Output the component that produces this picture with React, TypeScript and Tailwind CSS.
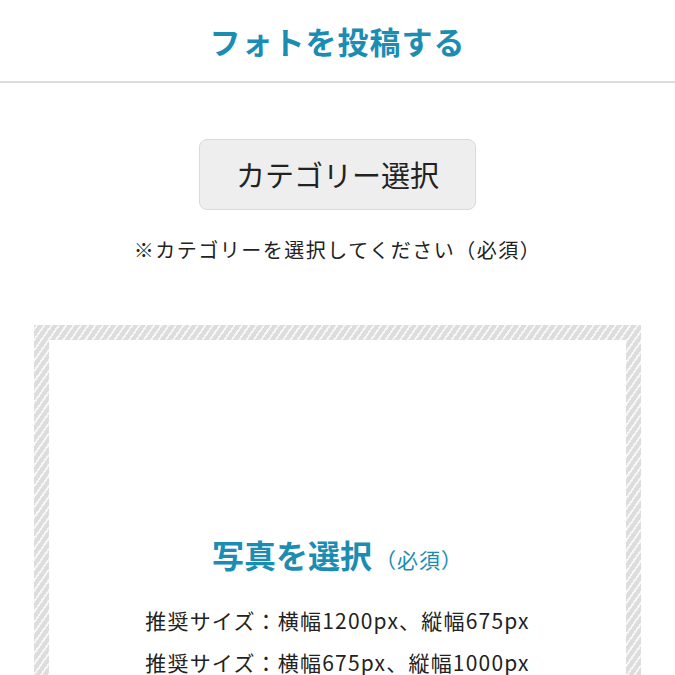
export default function App() {
  return (
    <div className="min-h-[675px] bg-white font-['Noto_Sans_CJK_JP','Noto_Sans',sans-serif] text-[#222]">
      <header className="flex h-[83px] items-center justify-center border-b-2 border-[#dcdcdc]">
        <h1 className="text-[31px] font-bold leading-none tracking-[1px] text-[#1b8db3]">フォトを投稿する</h1>
      </header>
      <div className="flex flex-col items-center">
        <button className="mt-[56px] flex h-[71px] w-[277px] items-center justify-center rounded-[8px] border border-[#d9d9d9] bg-[#eeeeee] text-[29px] leading-none text-[#222]">
          カテゴリー選択
        </button>
        <p className="mt-[25px] text-[20px] leading-[30px] tracking-[1.5px] text-[#222]">※カテゴリーを選択してください（必須）</p>
      </div>
      <div className="mx-[34px] mt-[60px] bg-[repeating-linear-gradient(-55deg,#dddddd_0px,#dddddd_4px,#f6f6f6_4px,#f6f6f6_6px)] p-[15px]">
        <div className="flex flex-col items-center bg-white pb-[60px] pt-[190px]">
          <div className="flex items-baseline">
            <span className="text-[32px] font-bold leading-[48px] text-[#1b8db3]">写真を選択</span>
            <span className="ml-[3px] text-[21px] tracking-[1px] text-[#1b8db3]">（必須）</span>
          </div>
          <p className="mt-[21px] text-[21px] leading-[42px] tracking-[1.2px] text-[#222]">推奨サイズ：横幅1200px、縦幅675px</p>
          <p className="text-[21px] leading-[42px] tracking-[1.2px] text-[#222]">推奨サイズ：横幅675px、縦幅1000px</p>
        </div>
      </div>
    </div>
  );
}
